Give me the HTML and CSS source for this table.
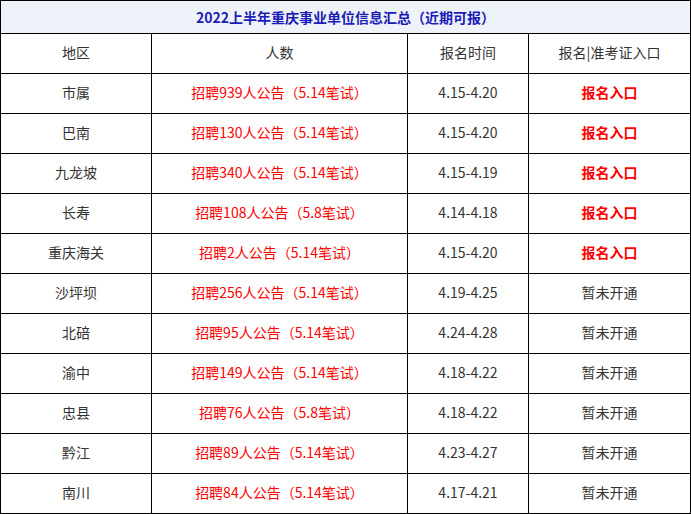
FILE: index.html
```html
<!DOCTYPE html>
<html lang="zh-CN">
<head>
<meta charset="utf-8">
<link rel="stylesheet" href="styles.css">
</head>
<body>
<div class="info">
  <div class="cell title">2022上半年重庆事业单位信息汇总（近期可报）</div>
  <div class="cell">地区</div><div class="cell">人数</div><div class="cell">报名时间</div><div class="cell">报名|准考证入口</div>
  <div class="cell">市属</div><div class="cell red">招聘939人公告（5.14笔试）</div><div class="cell">4.15-4.20</div><div class="cell link">报名入口</div>
  <div class="cell">巴南</div><div class="cell red">招聘130人公告（5.14笔试）</div><div class="cell">4.15-4.20</div><div class="cell link">报名入口</div>
  <div class="cell">九龙坡</div><div class="cell red">招聘340人公告（5.14笔试）</div><div class="cell">4.15-4.19</div><div class="cell link">报名入口</div>
  <div class="cell">长寿</div><div class="cell red">招聘108人公告（5.8笔试）</div><div class="cell">4.14-4.18</div><div class="cell link">报名入口</div>
  <div class="cell">重庆海关</div><div class="cell red">招聘2人公告（5.14笔试）</div><div class="cell">4.15-4.20</div><div class="cell link">报名入口</div>
  <div class="cell">沙坪坝</div><div class="cell red">招聘256人公告（5.14笔试）</div><div class="cell">4.19-4.25</div><div class="cell">暂未开通</div>
  <div class="cell">北碚</div><div class="cell red">招聘95人公告（5.14笔试）</div><div class="cell">4.24-4.28</div><div class="cell">暂未开通</div>
  <div class="cell">渝中</div><div class="cell red">招聘149人公告（5.14笔试）</div><div class="cell">4.18-4.22</div><div class="cell">暂未开通</div>
  <div class="cell">忠县</div><div class="cell red">招聘76人公告（5.8笔试）</div><div class="cell">4.18-4.22</div><div class="cell">暂未开通</div>
  <div class="cell">黔江</div><div class="cell red">招聘89人公告（5.14笔试）</div><div class="cell">4.23-4.27</div><div class="cell">暂未开通</div>
  <div class="cell">南川</div><div class="cell red">招聘84人公告（5.14笔试）</div><div class="cell">4.17-4.21</div><div class="cell">暂未开通</div>
</div>
</body>
</html>
```
FILE: styles.css
```css
html, body {
  margin: 0;
  padding: 0;
  background: #fff;
}
body {
  font-family: "Noto Sans CJK SC", "Noto Sans", sans-serif;
  font-size: 14px;
  color: #333;
  text-spacing-trim: space-all;
}
.info {
  display: grid;
  grid-template-columns: 151px 256px 121px 162px;
  grid-template-rows: 33px;
  grid-auto-rows: 40px;
  width: 691px;
  border-left: 1px solid #000;
  border-top: 1px solid #000;
  box-sizing: border-box;
}
.cell {
  box-sizing: border-box;
  border-right: 1px solid #000;
  border-bottom: 1px solid #000;
  display: flex;
  align-items: center;
  justify-content: center;
  line-height: 20px;
  white-space: nowrap;
  padding-bottom: 4px;
}
.title {
  grid-column: 1 / 5;
  background: #eef3f9;
  color: #1c1cb8;
  font-weight: bold;
  padding-bottom: 1px;
}
.red { color: #ff0000; }
.link { color: #ff0000; font-weight: bold; }
```
